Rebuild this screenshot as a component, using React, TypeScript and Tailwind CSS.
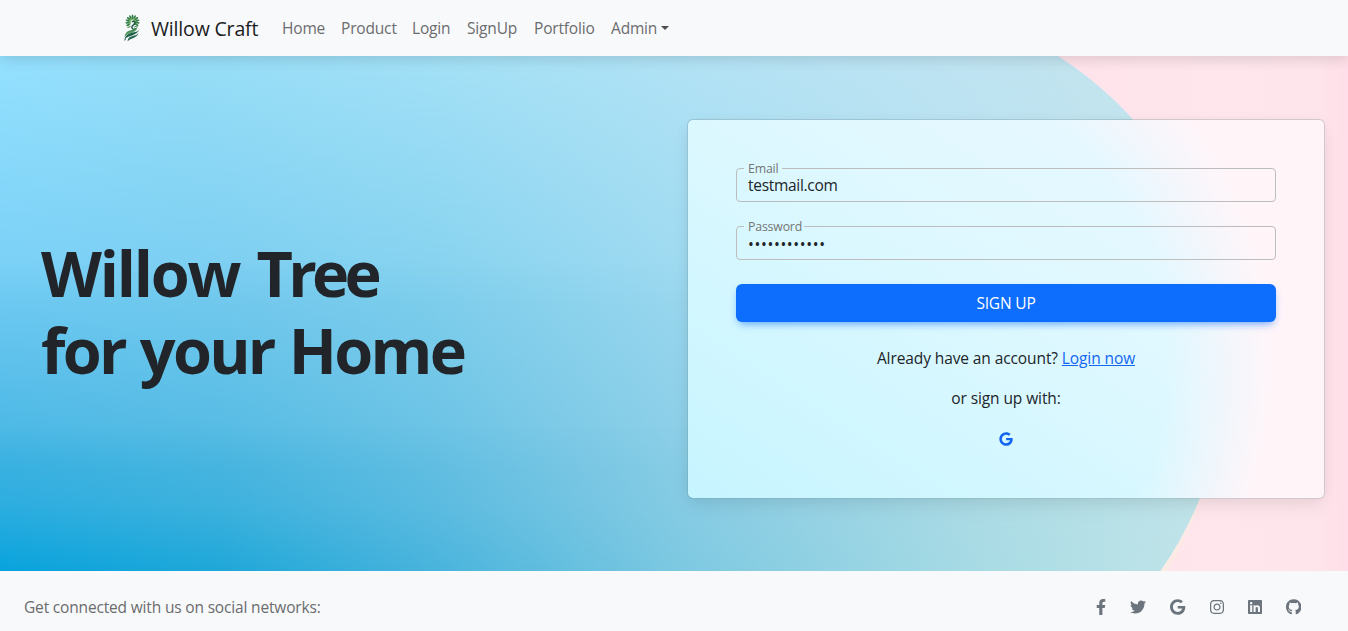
import React from "react";
import { FaFacebookF, FaTwitter, FaGoogle, FaInstagram, FaLinkedin, FaGithub } from "react-icons/fa";

const nav = [
  { label: "Home", cls: "w-[43px]" },
  { label: "Product", cls: "w-[55px]" },
  { label: "Login", cls: "w-[39px]" },
  { label: "SignUp", cls: "w-[51px]" },
  { label: "Portfolio", cls: "w-[61px]" },
];

const outerLeaves = [-125, -100, -75, -50, -25, 0, 25, 50, 75, 100, 125];

function Logo() {
  return (
    <svg viewBox="0 0 18 28" className="h-7 w-[18px] shrink-0">
      <g fill="#2f7a45">
        {outerLeaves.map((a) => (
          <ellipse key={a} cx="9.500" cy="3" rx="0.950" ry="2.400" transform={`rotate(${a} 9.5 7.8)`} />
        ))}
      </g>
      <g fill="#6fae5c">
        {outerLeaves.map((a) => (
          <ellipse key={a} cx="9.500" cy="5" rx="0.550" ry="1.300" transform={`rotate(${a + 12} 9.5 7.8)`} />
        ))}
      </g>
      <path d="M9 8c1.500-1.500 3.500-.5 3 1.200-.5 1.600-3.400 2-3.200 4 .1 1.300 1.700 1.800 2.200 3" fill="none" stroke="#1d5447" strokeWidth="1.400" />
      <path d="M4.500 13.500l3-1M11.500 12.300l3 .9M11 14l2.500 1M3.500 11.500l3-.8" stroke="#3c8749" strokeWidth="1.100" />
      <path d="M16.500 14.500c-1 4.500-6 3-10 5-3 1.500-4.800 3.500-5 6 3-3.500 6-3 9.500-5 3.300-1.600 5.400-3.500 5.500-6z" fill="#1b5b4a" />
      <path d="M14 13.500c-2.500 2.800-8 2.300-10.500 5-1.200 1.400-1.800 3-1.800 4.500 2.500-3.500 6-3.500 9-5 1.800-.9 3-2.500 3.300-4.500z" fill="#3f8a50" />
      <path d="M15.500 19c-2 3-6 2.500-8.500 4-1.600 1-2.300 2.500-2.400 4.500 1.400-2.200 3.900-2.900 6.400-3.800 2.400-1 4-2.500 4.500-4.700z" fill="#246650" />
      <path d="M3 20.500c3-2.500 7-2 11-4.800M4 23.800c3-2.500 7-2 10-4.500" fill="none" stroke="#a9cfb0" strokeWidth="0.400" />
      <path d="M2.500 24.500l-.8 2" stroke="#1b5b4a" strokeWidth="1" />
    </svg>
  );
}

function Backdrop() {
  return (
    <svg viewBox="0 0 1348 515" preserveAspectRatio="none" className="absolute inset-0 h-full w-full">
      <defs>
        <linearGradient id="r1">
          <stop offset="0" stopColor="#95e1ff" />
          <stop offset=".15" stopColor="#97def8" />
          <stop offset=".35" stopColor="#a3e1f7" />
          <stop offset=".6" stopColor="#b5e3f5" />
          <stop offset=".8" stopColor="#c0e4f2" />
          <stop offset="1" stopColor="#c6e5ea" />
        </linearGradient>
        <linearGradient id="r2">
          <stop offset="0" stopColor="#76cef5" />
          <stop offset=".18" stopColor="#78ccf0" />
          <stop offset=".35" stopColor="#82d0ee" />
          <stop offset=".58" stopColor="#9fdaf0" />
          <stop offset="1" stopColor="#c7e7f0" />
        </linearGradient>
        <linearGradient id="r3">
          <stop offset="0" stopColor="#44b4e2" />
          <stop offset=".18" stopColor="#50b8e1" />
          <stop offset=".35" stopColor="#66c0e3" />
          <stop offset=".58" stopColor="#8fcfe6" />
          <stop offset=".8" stopColor="#aedce6" />
          <stop offset="1" stopColor="#c3e5eb" />
        </linearGradient>
        <linearGradient id="r4">
          <stop offset="0" stopColor="#08a3dc" />
          <stop offset=".18" stopColor="#1fa7d8" />
          <stop offset=".35" stopColor="#48b3dc" />
          <stop offset=".55" stopColor="#7cc8e1" />
          <stop offset=".8" stopColor="#a8dbe4" />
          <stop offset="1" stopColor="#c4e5e9" />
        </linearGradient>
        <linearGradient id="f1" x2="0" y2="1">
          <stop offset="0" stopColor="#000" />
          <stop offset=".48" stopColor="#fff" />
        </linearGradient>
        <linearGradient id="f2" x2="0" y2="1">
          <stop offset=".4" stopColor="#000" />
          <stop offset=".8" stopColor="#fff" />
        </linearGradient>
        <linearGradient id="f3" x2="0" y2="1">
          <stop offset=".72" stopColor="#000" />
          <stop offset=".87" stopColor="#606060" />
          <stop offset="1" stopColor="#fff" />
        </linearGradient>
        <linearGradient id="pink" gradientUnits="userSpaceOnUse" x1="0" x2="1348">
          <stop offset=".8" stopColor="#ffe3eb" />
          <stop offset=".9" stopColor="#fee6ec" />
          <stop offset=".975" stopColor="#fee5eb" />
          <stop offset="1" stopColor="#ffdfe9" />
        </linearGradient>
        <mask id="m1" maskUnits="userSpaceOnUse" x="0" y="0" width="1348" height="515">
          <rect width="1348" height="515" fill="url(#f1)" />
        </mask>
        <mask id="m2" maskUnits="userSpaceOnUse" x="0" y="0" width="1348" height="515">
          <rect width="1348" height="515" fill="url(#f2)" />
        </mask>
        <mask id="m3" maskUnits="userSpaceOnUse" x="0" y="0" width="1348" height="515">
          <rect width="1348" height="515" fill="url(#f3)" />
        </mask>
        <clipPath id="disc">
          <path d="M0 0H1058A363 363 0 0 1 1160 515H0Z" />
        </clipPath>
        <filter id="soft"><feGaussianBlur stdDeviation="1.5" /></filter>
      </defs>
      <rect width="1348" height="515" fill="url(#pink)" />
      <path d="M1200 430Q1187 475 1162 517" fill="none" stroke="#fcebe4" strokeWidth="8" filter="url(#soft)" />
      <g clipPath="url(#disc)">
        <rect width="1230" height="515" fill="url(#r1)" />
        <g mask="url(#m1)"><rect width="1230" height="515" fill="url(#r2)" /></g>
        <g mask="url(#m2)"><rect width="1230" height="515" fill="url(#r3)" /></g>
        <g mask="url(#m3)"><rect width="1230" height="515" fill="url(#r4)" /></g>
      </g>
    </svg>
  );
}

function Field({ label, value, type, notch, text }: { label: string; value: string; type: string; notch: string; text: string }) {
  return (
    <fieldset className="h-[34px] rounded-[4px] border border-[#bdbdbd]">
      <legend className={`ml-[7px] flex h-px items-center px-1 text-[12.300px] leading-4 text-[#757575] ${notch}`}>{label}</legend>
      <input
        type={type}
        defaultValue={value}
        className={`block h-8 w-full bg-transparent px-[11px] text-[15.500px] text-[#212529] outline-none ${text}`}
      />
    </fieldset>
  );
}

export default function App() {
  return (
    <div className="flex h-[631px] w-full flex-col overflow-hidden bg-[#f8f9fa] font-['Open_Sans','Noto_Sans',sans-serif] text-[15.500px] leading-6 tracking-[-0.170px] text-[#212529]">
      <header className="relative z-10 flex h-14 shrink-0 items-center bg-[#f8f9fb] pl-[123px] shadow-[0_4px_12px_0_rgba(0,0,0,0.12)]">
        <Logo />
        <span className="ml-[10px] w-[107px] pt-0.5 text-[19.500px] whitespace-nowrap text-[#1b1c1d]">Willow Craft</span>
        <nav className="ml-6 flex gap-4 text-[#6b6c6d]">
          {nav.map((n) => (
            <a key={n.label} href="#" className={`whitespace-nowrap ${n.cls}`}>{n.label}</a>
          ))}
          <a href="#" className="flex items-center">
            <span className="w-[50px]">Admin</span>
            <span className="border-x-4 border-t-4 border-x-transparent border-t-[#4f4f4f]" />
          </a>
        </nav>
      </header>

      <main className="relative flex h-[515px] shrink-0 items-center overflow-hidden">
        <Backdrop />
        <h1 className="relative mb-[6px] w-[687px] pl-[41px] text-[63px] leading-[77px] font-bold tracking-[-2.750px]">
          <span className="tracking-[-2.200px] [word-spacing:3px]">Willow </span>
          <span className="tracking-[-4.800px]">Tree</span>
          <br />
          <span className="[word-spacing:1.500px]">for your Home</span>
        </h1>
        <form className="relative mb-[9px] flex h-[380px] w-[638px] flex-col rounded-[6px] border border-[#5a6e78]/25 bg-[radial-gradient(circle_at_175px_241px,rgba(255,245,249,0)_305px,rgba(255,245,249,0.5)_358px,rgb(255,245,249)_410px),linear-gradient(33deg,#c6f4ff_0%,#d2f7ff_25%,#dff8ff_55%,#e8f8ff_85%)] bg-clip-padding p-12 shadow-[0_2px_15px_-3px_rgba(0,0,0,0.07),0_10px_20px_-2px_rgba(0,0,0,0.06)]">
          <div className="flex flex-col gap-6">
            <Field label="Email" value="testmail.com" type="text" notch="w-[38px]" text="tracking-[-0.300px]" />
            <Field label="Password" value="testpassword" type="password" notch="w-[60px]" text="tracking-[0.650px] pt-0.5" />
            <button type="button" className="h-[38px] rounded-[6px] bg-[#0d6efd] font-medium text-white shadow-[0_4px_9px_-3px_rgba(13,110,253,0.7)]">SIGN UP</button>
          </div>
          <p className="mt-6 text-center tracking-[-0.100px]">
            Already have an account? <a href="#" className="text-[#1266f1] underline">Login now</a>
          </p>
          <p className="mt-4 text-center tracking-[-0.100px]">or sign up with:</p>
          <div className="mt-[22px] flex justify-center text-[#1266f1]">
            <FaGoogle size={14} />
          </div>
        </form>
      </main>

      <footer className="flex h-[60px] items-center justify-between bg-[#f8f9fb] pt-3 pr-[47px] pl-6 text-[#6b6c6d]">
        <span>Get connected with us on social networks:</span>
        <div className="flex items-center gap-6 text-[#6c757d]">
          <FaFacebookF className="h-4 w-[10px]" />
          <FaTwitter className="h-4 w-4" />
          <FaGoogle className="h-4 w-[15.250px]" />
          <FaInstagram className="h-4 w-[14px]" />
          <FaLinkedin className="h-4 w-[14px]" />
          <FaGithub className="h-4 w-[15.500px]" />
        </div>
      </footer>
    </div>
  );
}
